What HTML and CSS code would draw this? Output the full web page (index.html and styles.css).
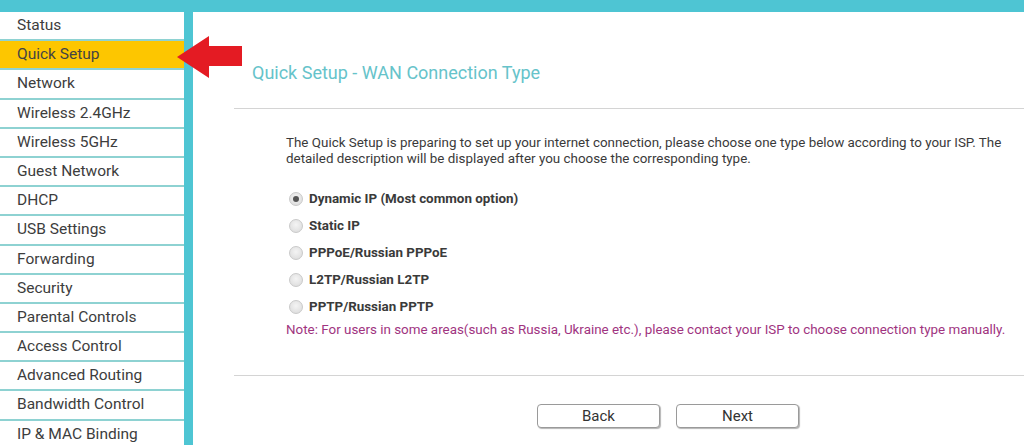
FILE: index.html
```html
<!DOCTYPE html>
<html lang="en">
<head>
    <meta charset="UTF-8">
    <meta name="viewport" content="width=device-width, initial-scale=1.0">
    <title>Quick Setup</title>
    <link rel="stylesheet" href="styles.css">
</head>
<body>
    <div class="topbar"></div>
    <div class="layout">
        <ul class="menu">
            <li>Status</li>
            <li class="active">Quick Setup</li>
            <li>Network</li>
            <li>Wireless 2.4GHz</li>
            <li>Wireless 5GHz</li>
            <li>Guest Network</li>
            <li>DHCP</li>
            <li>USB Settings</li>
            <li>Forwarding</li>
            <li>Security</li>
            <li>Parental Controls</li>
            <li>Access Control</li>
            <li>Advanced Routing</li>
            <li>Bandwidth Control</li>
            <li>IP &amp; MAC Binding</li>
        </ul>

        <div class="main">
            <h1>Quick Setup - WAN Connection Type</h1>
            <hr>
            <div class="content">
                <p class="intro">The Quick Setup is preparing to set up your internet connection, please choose one type below according to your ISP. The detailed description will be displayed after you choose the corresponding type.</p>

                <label class="option"><span class="radio checked"></span>Dynamic IP (Most common option)</label>
                <label class="option"><span class="radio"></span>Static IP</label>
                <label class="option"><span class="radio"></span>PPPoE/Russian PPPoE</label>
                <label class="option"><span class="radio"></span>L2TP/Russian L2TP</label>
                <label class="option"><span class="radio"></span>PPTP/Russian PPTP</label>

                <p class="note">Note: For users in some areas(such as Russia, Ukraine etc.), please contact your ISP to choose connection type manually.</p>
            </div>
            <hr>
            <div class="buttons">
                <button type="button">Back</button>
                <button type="button">Next</button>
            </div>
        </div>
    </div>

    <!-- pointer arrow -->
    <svg class="arrow" width="66" height="44" viewBox="0 0 66 44">
        <polygon points="0,21 32,0 32,10 65,10 65,30 32,30 32,42" fill="#e41b23"/>
    </svg>
</body>
</html>
```

FILE: styles.css
```css
body {
    font-family: Roboto, 'Liberation Sans', sans-serif;
    margin: 0;
    height: 445px;
    overflow: hidden;
    background: #fff;
    color: #333;
}
.topbar {
    height: 12px;
    background-color: #4ec5d3;
}
.layout {
    display: flex;
    height: 433px;
}
.menu {
    list-style: none;
    margin: 0;
    padding: 0;
    width: 184px;
    border-right: 9px solid #4ec5d3;
    flex-shrink: 0;
}
.menu li {
    height: 27.2px;
    line-height: 27px;
    padding-left: 17px;
    font-size: 15.5px;
    color: #3d3d3d;
    border-bottom: 2px solid #8ed2d2;
}
.menu li.active {
    background-color: #fdc600;
    color: #444;
}
.main {
    flex: 1;
    padding: 51px 0 0 41px;
}
h1 {
    margin: 0 0 25px 18px;
    font-size: 18px;
    line-height: 20px;
    font-weight: 400;
    color: #66c3ca;
}
hr {
    margin: 0;
    border: none;
    border-top: 1px solid #d4d4d4;
}
.content {
    padding: 26px 12px 0 52px;
    height: 240px;
}
.intro {
    margin: 0 0 18px;
    font-size: 13.4px;
    line-height: 16px;
    color: #3a3a3a;
}
.option {
    display: flex;
    align-items: center;
    height: 27px;
    font-size: 13.4px;
    font-weight: 700;
    color: #3a3a3a;
}
.radio {
    width: 12px;
    height: 12px;
    margin: 0 6px 0 3px;
    border-radius: 50%;
    border: 1px solid #c9c9c9;
    background: radial-gradient(circle at 50% 40%, #f4f4f4, #d9d9d9);
    position: relative;
}
.radio.checked::after {
    content: "";
    position: absolute;
    left: 3px;
    top: 3px;
    width: 6px;
    height: 6px;
    border-radius: 50%;
    background: #555;
}
.note {
    margin: 2px 0 0;
    font-size: 13.4px;
    line-height: 16px;
    color: #a0347f;
}
.buttons {
    display: flex;
    gap: 16px;
    padding: 28px 0 0 303px;
}
button {
    width: 123px;
    height: 24px;
    font-family: Roboto, 'Liberation Sans', sans-serif;
    font-size: 15px;
    color: #333;
    background: #fff;
    border: 1px solid #9a9a9a;
    border-radius: 4px;
    box-shadow: 1px 1px 1px #b5b5b5;
    cursor: pointer;
    padding: 0;
}
.arrow {
    position: absolute;
    left: 177px;
    top: 36px;
}
```
